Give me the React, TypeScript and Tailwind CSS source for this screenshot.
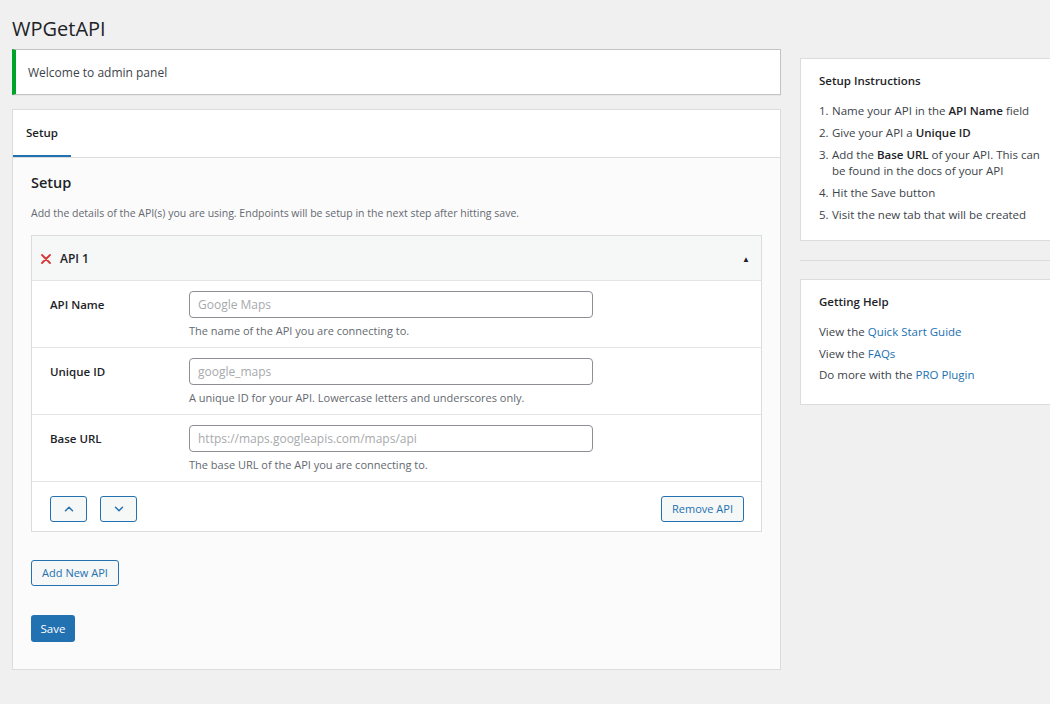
import { ChevronDown, ChevronUp } from "lucide-react";

type Field = {
  label: string;
  placeholder: string;
  help: string;
};

const fields: Field[] = [
  { label: "API Name", placeholder: "Google Maps", help: "The name of the API you are connecting to." },
  { label: "Unique ID", placeholder: "google_maps", help: "A unique ID for your API. Lowercase letters and underscores only." },
  { label: "Base URL", placeholder: "https://maps.googleapis.com/maps/api", help: "The base URL of the API you are connecting to." },
];

const font = { fontFamily: '"Open Sans", "Noto Sans", sans-serif' };

const SecondaryButton = ({ children, className = "" }: { children: React.ReactNode; className?: string }) => (
  <button
    className={`flex items-center justify-center rounded-[3px] border border-[#2271b1] bg-[#f6f7f7] text-[11px] text-[#2271b1] ${className}`}
  >
    {children}
  </button>
);

const FieldRow = ({ field }: { field: Field }) => (
  <div className="flex border-t border-[#e5e5e5] px-[18px] pt-[10px] pb-[7px]">
    <div className="flex h-[27px] w-[139px] shrink-0 items-center text-[11.5px] font-semibold text-[#1d2327]">
      {field.label}
    </div>
    <div>
      <input
        readOnly
        placeholder={field.placeholder}
        className="h-[27px] w-[404px] rounded-[4px] border border-[#8c8f94] bg-white px-[8px] text-[12px] text-[#2c3338] outline-none placeholder:text-[#a7aaad]"
      />
      <p className="mt-[4px] text-[11px] leading-[18px] text-[#646970]">{field.help}</p>
    </div>
  </div>
);

const SideCard = ({ title, gap, children }: { title: string; gap: string; children: React.ReactNode }) => (
  <div className="border border-[#dcdcde] bg-white px-[18px] pt-[13px]">
    <h3 className={`${gap} text-[11.5px] font-semibold leading-[18px] text-[#1d2327]`}>{title}</h3>
    {children}
  </div>
);

const Step = ({ n, children, last = false }: { n: number; children: React.ReactNode; last?: boolean }) => (
  <li className={`flex ${last ? "" : "mb-[6px]"}`}>
    <span className="w-[13px] shrink-0">{n}.</span>
    <span className="w-[212px]">{children}</span>
  </li>
);

export default function App() {
  return (
    <div className="min-h-[704px] w-[1050px] overflow-hidden bg-[#f0f0f1] text-[#3c434a]" style={font}>
      <div className="flex">
        {/* main column */}
        <div className="ml-[12px] w-[769px] shrink-0">
          <h1 className="pt-[15px] text-[20px] leading-[27px] text-[#1d2327]">WPGetAPI</h1>

          <div className="mt-[7px] flex h-[46px] items-center border border-l-4 border-[#c3c4c7] border-l-[#00a32a] bg-white pl-[12px] pt-[1px] text-[12px] text-[#3c434a] shadow-[0_1px_1px_rgba(0,0,0,0.04)]">
            Welcome to admin panel
          </div>

          <div className="mt-[14px] border border-[#dcdcde] bg-white">
            {/* tabs */}
            <div className="flex h-[48px] border-b border-[#dcdcde] bg-white">
              <div className="flex items-center border-b-2 border-[#2271b1] px-[13px] text-[11.5px] font-semibold text-[#1d2327]">
                Setup
              </div>
            </div>

            <div className="bg-[#fbfbfb] px-[18px] pt-[16px] pb-[27px]">
              <h2 className="text-[14.5px] font-semibold leading-[18px] text-[#1d2327]">Setup</h2>
              <p className="mt-[12px] text-[10.5px] leading-[18px] text-[#646970]">
                Add the details of the API(s) you are using. Endpoints will be setup in the next step after hitting save.
              </p>

              <div className="mt-[13px] border border-[#dcdcde] bg-white">
                <div className="flex h-[44px] items-center bg-[#f6f7f7] pl-[9px] pr-[11px] pt-[1px]">
                  <svg width="10" height="10" viewBox="0 0 10 10" className="mr-[9px]">
                    <path d="M1 1L9 9M9 1L1 9" stroke="#d63638" strokeWidth="1.8" strokeLinecap="round" />
                  </svg>
                  <span className="text-[12px] font-semibold text-[#1d2327]">API 1</span>
                  <span className="ml-auto text-[8px] text-[#1d2327]">▲</span>
                </div>

                {fields.map((f) => (
                  <FieldRow key={f.label} field={f} />
                ))}

                <div className="flex items-center border-t border-[#e5e5e5] pl-[18px] pr-[17px] pt-[14px] pb-[9px]">
                  <SecondaryButton className="h-[26px] w-[37px]">
                    <ChevronUp size={14} strokeWidth={2.5} />
                  </SecondaryButton>
                  <SecondaryButton className="ml-[13px] h-[26px] w-[37px]">
                    <ChevronDown size={14} strokeWidth={2.5} />
                  </SecondaryButton>
                  <SecondaryButton className="ml-auto h-[26px] w-[83px]">Remove API</SecondaryButton>
                </div>
              </div>

              <SecondaryButton className="mt-[28px] h-[26px] w-[88px]">Add New API</SecondaryButton>

              <button className="mt-[29px] h-[27px] w-[44px] rounded-[3px] bg-[#2271b1] text-[11.5px] text-white">
                Save
              </button>
            </div>
          </div>
        </div>

        {/* sidebar */}
        <div className="ml-[19px] w-[280px] shrink-0 pt-[58px]">
          <SideCard title="Setup Instructions" gap="mb-[13px]">
            <ol className="pb-[17px] text-[11.5px] leading-[16px] text-[#3c434a]">
              <Step n={1}>
                Name your API in the <b className="font-semibold text-[#1d2327]">API Name</b> field
              </Step>
              <Step n={2}>
                Give your API a <b className="font-semibold text-[#1d2327]">Unique ID</b>
              </Step>
              <Step n={3}>
                Add the <b className="font-semibold text-[#1d2327]">Base URL</b> of your API. This can be found in the docs of your API
              </Step>
              <Step n={4}>Hit the Save button</Step>
              <Step n={5} last>
                Visit the new tab that will be created
              </Step>
            </ol>
          </SideCard>

          <div className="mt-[19px] mb-[18px] border-t border-[#dcdcde]" />

          <SideCard title="Getting Help" gap="mb-[10px]">
            <div className="pb-[18px] text-[11.5px] leading-[21.5px] text-[#3c434a]">
              <p>
                View the <a className="text-[#2271b1]">Quick Start Guide</a>
              </p>
              <p>
                View the <a className="text-[#2271b1]">FAQs</a>
              </p>
              <p>
                Do more with the <a className="text-[#2271b1]">PRO Plugin</a>
              </p>
            </div>
          </SideCard>
        </div>
      </div>
    </div>
  );
}
